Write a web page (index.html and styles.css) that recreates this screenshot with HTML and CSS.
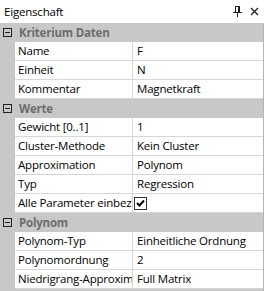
FILE: index.html
```html
<!DOCTYPE html>
<html lang="de">
<head>
    <meta charset="UTF-8">
    <title>Eigenschaft</title>
    <link rel="stylesheet" href="styles.css">
</head>
<body>
    <div class="panel">
        <div class="titlebar">
            <span class="title">Eigenschaft</span>
            <span class="tools">
                <svg class="pin" width="9" height="11" viewBox="0 0 9 11">
                    <path d="M2 0.5h5M2.5 0.5v6M5.5 0.5v6M6.5 0.5v6M0 6.5h9M4.5 6.5v4.5" stroke="#1e1e1e" stroke-width="1" fill="none"/>
                </svg>
                <svg class="close" width="9" height="9" viewBox="0 0 9 9">
                    <path d="M1 1L8 8M8 1L1 8" stroke="#1e1e1e" stroke-width="1.3"/>
                </svg>
            </span>
        </div>

        <div class="grid">
            <div class="category"><span class="toggle"></span>Kriterium Daten</div>
            <div class="row"><div class="name">Name</div><div class="value">F</div></div>
            <div class="row"><div class="name">Einheit</div><div class="value">N</div></div>
            <div class="row"><div class="name">Kommentar</div><div class="value">Magnetkraft</div></div>

            <div class="category"><span class="toggle"></span>Werte</div>
            <div class="row"><div class="name">Gewicht [0..1]</div><div class="value">1</div></div>
            <div class="row"><div class="name">Cluster-Methode</div><div class="value">Kein Cluster</div></div>
            <div class="row"><div class="name">Approximation</div><div class="value">Polynom</div></div>
            <div class="row"><div class="name">Typ</div><div class="value">Regression</div></div>
            <div class="row"><div class="name">Alle Parameter einbeziehen</div><div class="value"><span class="check">
                <svg width="11" height="11" viewBox="0 0 11 11"><path d="M2 5l2.5 2.5L9 2.5" stroke="#000" stroke-width="2" fill="none"/></svg>
            </span></div></div>

            <div class="category"><span class="toggle"></span>Polynom</div>
            <div class="row"><div class="name">Polynom-Typ</div><div class="value">Einheitliche Ordnung</div></div>
            <div class="row"><div class="name">Polynomordnung</div><div class="value">2</div></div>
            <div class="row"><div class="name">Niedrigrang-Approximation</div><div class="value">Full Matrix</div></div>
        </div>
    </div>
</body>
</html>
```

FILE: styles.css
```css
* {
    margin: 0;
    padding: 0;
    box-sizing: border-box;
}

body {
    font-family: 'Open Sans', 'Noto Sans', sans-serif;
    font-size: 11.5px;
    color: #000;
    background: #fff;
    width: 265px;
    height: 291px;
    overflow: hidden;
}

.titlebar {
    height: 23px;
    display: flex;
    align-items: center;
    justify-content: space-between;
    padding: 0 6px 0 4px;
    background: #fff;
}

.title {
    font-size: 11.5px;
    letter-spacing: -0.2px;
}

.tools {
    display: flex;
    align-items: center;
    gap: 8px;
}

.grid {
    width: 264px;
    height: 268px;
    background: #c8c8c8;
    border-right: 1px solid #b4b4b4;
}

.category {
    height: 19px;
    display: flex;
    align-items: center;
    font-weight: bold;
    color: #6d6d6d;
    letter-spacing: -0.2px;
}

.toggle {
    width: 9px;
    height: 9px;
    margin: 0 7px 0 3px;
    border: 1px solid #222;
    position: relative;
}

.toggle::after {
    content: '';
    position: absolute;
    left: 1px;
    right: 1px;
    top: 3px;
    height: 1px;
    background: #222;
}

.row {
    display: flex;
    height: 19px;
    padding-left: 15px;
}

.name,
.value {
    background: #fff;
    border-bottom: 1px solid #d6d6d6;
    padding-left: 3px;
    line-height: 18px;
    white-space: nowrap;
    overflow: hidden;
    letter-spacing: -0.2px;
}

.name {
    width: 118px;
    border-right: 1px solid #d6d6d6;
}

.value {
    flex: 1;
    padding-left: 4px;
}

.check {
    display: inline-block;
    width: 13px;
    height: 13px;
    margin-top: 3px;
    margin-left: -3px;
    border: 1px solid #333;
    vertical-align: top;
}

.check svg {
    display: block;
}
```
